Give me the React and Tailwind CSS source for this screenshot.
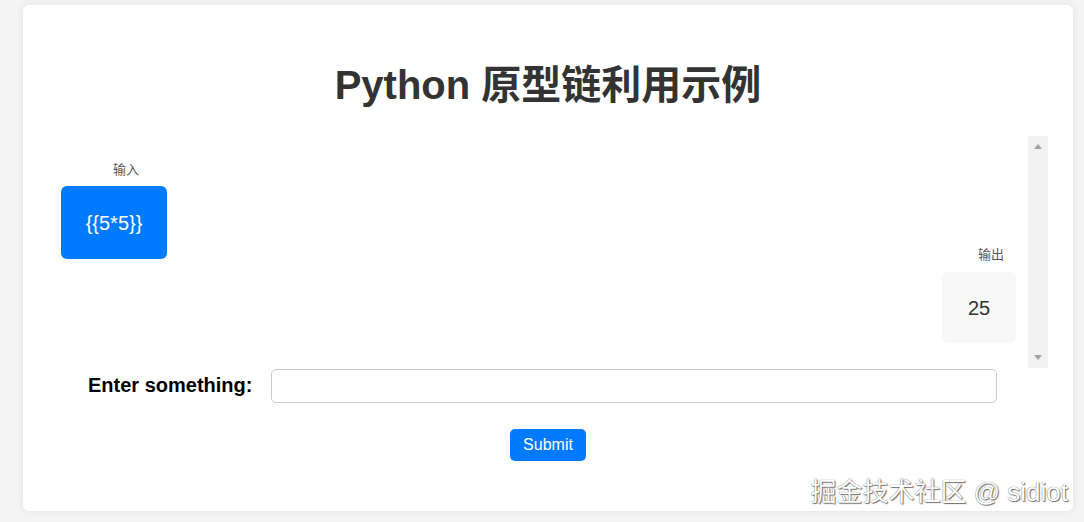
import React from 'react';

const sans = 'font-["Liberation_Sans","Noto_Sans_CJK_SC",sans-serif]';

const Scrollbar = () => (
    <div className="w-[20px] flex-shrink-0 bg-[#f1f1f1] flex flex-col items-center justify-between py-[8px]">
        <div className="w-0 h-0 border-l-[4px] border-r-[4px] border-b-[5px] border-l-transparent border-r-transparent border-b-[#a3a3a3]" />
        <div className="w-0 h-0 border-l-[4px] border-r-[4px] border-t-[5px] border-l-transparent border-r-transparent border-t-[#a3a3a3]" />
    </div>
);

const App = () => {
    return (
        <div className={`relative h-[522px] w-[1084px] bg-[#f4f4f4] pt-[5px] pl-[23px] ${sans}`}>
            <div className="w-[1050px] h-[506px] bg-white rounded-[6px] shadow-[0_0_8px_rgba(0,0,0,0.08)] pt-[56px] px-[25px]">
                <h1 className="h-[48px] leading-[48px] text-center text-[40px] font-bold text-[#333]">
                    Python 原型链利用示例
                </h1>

                <div className="mt-[27px] h-[232px] flex">
                    <div className="flex-1 flex flex-col">
                        <div className="pt-[25px] pl-[13px]">
                            <p className="ml-[52px] text-[13px] leading-[17px] text-[#555]">输入</p>
                            <div className="mt-[8px] w-[106px] h-[73px] rounded-[6px] bg-[#007bff] flex items-center justify-center text-[20px] text-white">
                                {'{{5*5}}'}
                            </div>
                        </div>
                        <div className="self-end pr-[12px] mt-[-13px] flex flex-col items-end">
                            <p className="mr-[12px] text-[13px] leading-[17px] text-[#555]">输出</p>
                            <div className="mt-[9px] w-[74px] h-[71px] rounded-[6px] bg-[#f8f8f8] flex items-center justify-center text-[20px] text-[#333]">
                                25
                            </div>
                        </div>
                    </div>
                    <Scrollbar />
                </div>

                <form className="mt-[1px]" onSubmit={(e) => e.preventDefault()}>
                    <div className="flex items-center pl-[40px] pr-[51px] gap-[19px]">
                        <label className="text-[20px] leading-[24px] mt-[-3px] font-bold text-black whitespace-nowrap">Enter something:</label>
                        <input
                            type="text"
                            className="flex-1 h-[34px] border border-[#ccc] rounded-[5px] px-2 outline-none"
                        />
                    </div>
                    <div className="flex justify-center mt-[26px]">
                        <button
                            type="submit"
                            className="w-[76px] h-[32px] rounded-[5px] bg-[#007bff] text-white text-[16px]"
                        >
                            Submit
                        </button>
                    </div>
                </form>
            </div>

            <span className="absolute right-[16px] bottom-[15px] text-[26px] leading-[30px] text-white [text-shadow:0_0_1px_#444,1px_1px_1px_#777]">
                掘金技术社区 @ sidiot
            </span>
        </div>
    );
};

export default App;
